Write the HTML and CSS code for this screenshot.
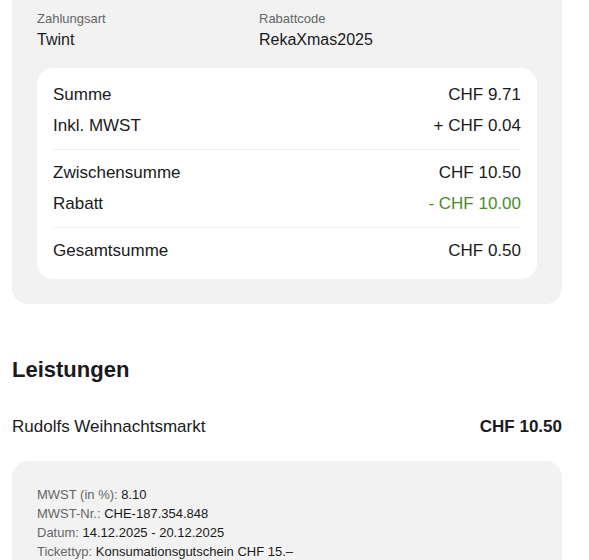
FILE: index.html
```html
<!DOCTYPE html>
<html lang="de">
<head>
<meta charset="utf-8">
<title>Bestellung</title>
<link rel="stylesheet" href="styles.css">
</head>
<body>
<main class="page">
  <section class="card summary">
    <div class="meta">
      <div class="meta-item">
        <div class="meta-label">Zahlungsart</div>
        <div class="meta-value">Twint</div>
      </div>
      <div class="meta-item">
        <div class="meta-label">Rabattcode</div>
        <div class="meta-value">RekaXmas2025</div>
      </div>
    </div>
    <div class="totals">
      <div class="row"><span>Summe</span><span>CHF 9.71</span></div>
      <div class="row row-gap"><span>Inkl. MWST</span><span>+ CHF 0.04</span></div>
      <hr class="divider">
      <div class="row"><span>Zwischensumme</span><span>CHF 10.50</span></div>
      <div class="row row-gap"><span>Rabatt</span><span class="discount">- CHF 10.00</span></div>
      <hr class="divider">
      <div class="row"><span>Gesamtsumme</span><span>CHF 0.50</span></div>
    </div>
  </section>

  <h2 class="section-title">Leistungen</h2>

  <div class="item">
    <span class="item-name">Rudolfs Weihnachtsmarkt</span>
    <span class="item-price">CHF 10.50</span>
  </div>

  <section class="card info">
    <div class="info-line"><span class="info-label">MWST (in %):</span> <span class="info-value">8.10</span></div>
    <div class="info-line"><span class="info-label">MWST-Nr.:</span> <span class="info-value">CHE-187.354.848</span></div>
    <div class="info-line"><span class="info-label">Datum:</span> <span class="info-value">14.12.2025 - 20.12.2025</span></div>
    <div class="info-line"><span class="info-label">Tickettyp:</span> <span class="info-value">Konsumationsgutschein CHF 15.–</span></div>
  </section>
</main>
</body>
</html>
```

FILE: styles.css
```css
* {
  box-sizing: border-box;
}

html, body {
  margin: 0;
  padding: 0;
  background: #ffffff;
}

body {
  font-family: "Liberation Sans", Arial, sans-serif;
  color: #1a1a1c;
}

.page {
  width: 550px;
  margin-left: 12px;
}

.card {
  background: #f2f2f2;
  border-radius: 16px;
}

.summary {
  margin-top: -16px;
  padding: 27px 25px 25px;
}

.meta {
  display: grid;
  grid-template-columns: 222px 1fr;
}

.meta-label {
  font-size: 13px;
  line-height: 16px;
  color: #666666;
}

.meta-value {
  margin-top: 2px;
  font-size: 16px;
  line-height: 22px;
  color: #1a1a1c;
}

.totals {
  margin-top: 17px;
  background: #ffffff;
  border-radius: 16px;
  padding: 15px 16px 16px;
}

.row {
  display: flex;
  justify-content: space-between;
  font-size: 17px;
  line-height: 24px;
}

.row-gap {
  margin-top: 7px;
}

.discount {
  color: #4b8b2b;
}

.divider {
  border: 0;
  border-top: 1px solid #ededed;
  margin: 11px 0;
}

.section-title {
  margin: 52px 0 0;
  font-size: 22px;
  line-height: 28px;
  font-weight: 700;
  color: #1a1a1c;
}

.item {
  display: flex;
  justify-content: space-between;
  margin-top: 31px;
  font-size: 17px;
  line-height: 24px;
}

.item-price {
  font-weight: 700;
}

.info {
  margin-top: 22px;
  padding: 24px 25px 24px;
}

.info-line {
  font-size: 13px;
  line-height: 19px;
}

.info-label {
  color: #666666;
}

.info-value {
  color: #1a1a1c;
}
```
